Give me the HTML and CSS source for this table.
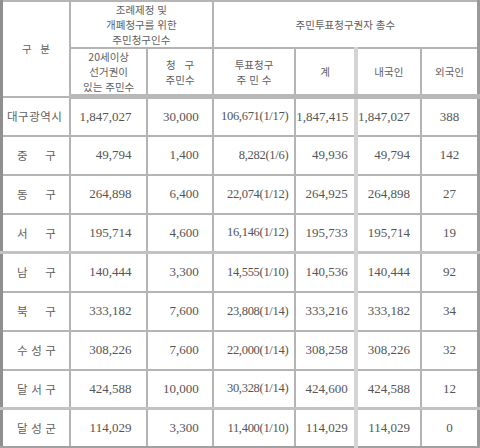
FILE: index.html
```html
<!DOCTYPE html>
<html lang="ko">
<head>
<meta charset="utf-8">
<link rel="stylesheet" href="styles.css">
</head>
<body>
<table class="tbl">
  <colgroup>
    <col class="c1"><col class="c2"><col class="c3"><col class="c4"><col class="c5"><col class="c6"><col class="c7">
  </colgroup>
  <thead>
    <tr class="h1">
      <th rowspan="2" class="name">구 &nbsp; 분</th>
      <th colspan="2">조례제정 및<br>개폐청구를 위한<br>주민청구인수</th>
      <th colspan="4">주민투표청구권자 총수</th>
    </tr>
    <tr class="h2">
      <th>20세이상<br>선거권이<br>있는 주민수</th>
      <th>청 &nbsp; 구<br>주민수</th>
      <th>투표청구<br>주 민 수</th>
      <th class="dbl">계</th>
      <th>내국인</th>
      <th>외국인</th>
    </tr>
  </thead>
  <tbody>
    <tr><td class="nm wide">대구광역시</td><td class="n2">1,847,027</td><td class="n3">30,000</td><td class="n4">106,671(1/17)</td><td class="n5 dbl">1,847,415</td><td class="n6">1,847,027</td><td class="n7">388</td></tr>
    <tr><td class="nm">중 구</td><td class="n2">49,794</td><td class="n3">1,400</td><td class="n4">8,282(1/6)</td><td class="n5 dbl">49,936</td><td class="n6">49,794</td><td class="n7">142</td></tr>
    <tr><td class="nm">동 구</td><td class="n2">264,898</td><td class="n3">6,400</td><td class="n4">22,074(1/12)</td><td class="n5 dbl">264,925</td><td class="n6">264,898</td><td class="n7">27</td></tr>
    <tr><td class="nm">서 구</td><td class="n2">195,714</td><td class="n3">4,600</td><td class="n4">16,146(1/12)</td><td class="n5 dbl">195,733</td><td class="n6">195,714</td><td class="n7">19</td></tr>
    <tr class="band"><td class="nm">남 구</td><td class="n2">140,444</td><td class="n3">3,300</td><td class="n4">14,555(1/10)</td><td class="n5 dbl">140,536</td><td class="n6">140,444</td><td class="n7">92</td></tr>
    <tr><td class="nm">북 구</td><td class="n2">333,182</td><td class="n3">7,600</td><td class="n4">23,808(1/14)</td><td class="n5 dbl">333,216</td><td class="n6">333,182</td><td class="n7">34</td></tr>
    <tr><td class="nm">수 성 구</td><td class="n2">308,226</td><td class="n3">7,600</td><td class="n4">22,000(1/14)</td><td class="n5 dbl">308,258</td><td class="n6">308,226</td><td class="n7">32</td></tr>
    <tr><td class="nm">달 서 구</td><td class="n2">424,588</td><td class="n3">10,000</td><td class="n4">30,328(1/14)</td><td class="n5 dbl">424,600</td><td class="n6">424,588</td><td class="n7">12</td></tr>
    <tr class="band"><td class="nm">달 성 군</td><td class="n2">114,029</td><td class="n3">3,300</td><td class="n4">11,400(1/10)</td><td class="n5 dbl">114,029</td><td class="n6">114,029</td><td class="n7">0</td></tr>
  </tbody>
</table>
</body>
</html>
```

FILE: styles.css
```css
html, body {
  margin: 0;
  padding: 0;
  background: #ffffff;
}

.tbl {
  width: 480px;
  border-collapse: collapse;
  table-layout: fixed;
  color: #555555;
  font-family: "Liberation Serif", "Noto Sans CJK KR", serif;
  font-size: 13px;
  border-top: 2px solid #9c9c9c;
  border-left: 3px solid #8f8f8f;
  border-right: 3px solid #9a9a9a;
  border-bottom: 3px solid #a0a0a0;
}

.c1 { width: 68px; }
.c2 { width: 77px; }
.c3 { width: 65px; }
.c4 { width: 82px; }
.c5 { width: 60px; }
.c6 { width: 65px; }
.c7 { width: 57px; }

.tbl th,
.tbl td {
  border: 2px solid #b4b4b4;
  padding: 0;
  overflow: visible;
  white-space: nowrap;
}

.tbl th {
  font-family: "Noto Sans CJK KR", sans-serif;
  font-weight: normal;
  font-size: 10.5px;
  line-height: 15px;
  text-align: center;
  color: #606060;
}

.h1 { height: 47px; }
.h2 { height: 46px; }
.h2 th { border-bottom: 5px solid #b8b8b8; }

.tbl tbody tr { height: 39px; }

.tbl td.dbl,
.tbl th.dbl {
  border-right: 4px solid #d4d4d4;
}

.band td {
  border-top: 3px solid #c2c2c2;
}

.nm {
  font-family: "Noto Sans CJK KR", sans-serif;
  font-size: 11.5px;
  color: #606060;
  padding: 0 13px 0 14px !important;
  text-align: justify;
  text-align-last: justify;
}

.nm.wide {
  padding: 0 3px 0 4px !important;
  letter-spacing: 0.5px;
}

.n2 { text-align: right; padding-right: 15px !important; }
.n3 { text-align: right; padding-right: 13px !important; }
.n4 { text-align: right; padding-right: 6px !important; font-size: 12.5px; letter-spacing: -0.3px; }
.n5 { text-align: right; padding-right: 6px !important; }
.n6 { text-align: right; padding-right: 10px !important; }
.n7 { text-align: center; }
```
